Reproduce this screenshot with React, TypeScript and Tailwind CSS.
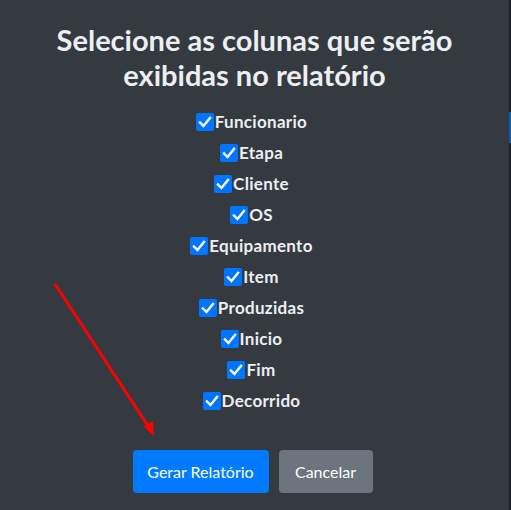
import React, { useState } from 'react';

const COLUMNS = [
  'Funcionario',
  'Etapa',
  'Cliente',
  'OS',
  'Equipamento',
  'Item',
  'Produzidas',
  'Inicio',
  'Fim',
  'Decorrido',
];

const CheckBox: React.FC<{ checked: boolean }> = ({ checked }) => (
  <span
    className={`flex h-[18px] w-[18px] shrink-0 items-center justify-center rounded-[2px] ${
      checked ? 'bg-[#0075ff]' : 'bg-white'
    }`}
  >
    {checked && (
      <svg width="14" height="14" viewBox="0 0 14 14" fill="none">
        <path d="M2 7.5 L5.5 11 L12 3" stroke="white" strokeWidth="2.4" strokeLinecap="square" />
      </svg>
    )}
  </span>
);

export default function App() {
  const [selected, setSelected] = useState<Record<string, boolean>>(
    Object.fromEntries(COLUMNS.map(c => [c, true]))
  );

  const toggle = (col: string) => {
    setSelected(prev => ({ ...prev, [col]: !prev[col] }));
  };

  return (
    <div
      className="relative flex h-[510px] w-[511px] overflow-hidden bg-[#343a40]"
      style={{ fontFamily: 'Lato, "Open Sans", sans-serif' }}
    >
      <div className="flex flex-1 flex-col items-center pt-[22px]">
        <h2 className="text-center text-[29px] font-bold leading-[35px] text-[#eceef1]">
          Selecione as colunas que serão
          <br />
          exibidas no relatório
        </h2>

        {/* Column checkboxes */}
        <div className="mt-[14px] flex flex-col items-center pr-[6px]">
          {COLUMNS.map(col => (
            <label
              key={col}
              className="flex h-[31px] cursor-pointer items-center gap-[1px]"
              onClick={() => toggle(col)}
            >
              <CheckBox checked={selected[col]} />
              <span className="text-[17px] font-bold tracking-[0.3px] text-[#eceef1]">{col}</span>
            </label>
          ))}
        </div>

        <div className="mt-[34px] flex gap-[10px] pr-[4px]">
          <button className="h-[43px] w-[136px] rounded-[4px] bg-[#007bff] text-[16px] text-white">
            Gerar Relatório
          </button>
          <button className="h-[43px] w-[94px] rounded-[4px] bg-[#6c757d] text-[16px] text-white">
            Cancelar
          </button>
        </div>
      </div>

      {/* sliver of neighbouring panel */}
      <div className="flex w-[2px] flex-col bg-[#1e2227]">
        <div className="mt-[112px] h-[31px] bg-[#0b5cad]" />
      </div>

      {/* annotation arrow */}
      <svg className="pointer-events-none absolute left-0 top-0" width="511" height="510">
        <line x1="55" y1="284" x2="150" y2="429" stroke="#ff0000" strokeWidth="3" />
        <polygon points="154,436 143,426 153,421" fill="#ff0000" />
      </svg>
    </div>
  );
}
